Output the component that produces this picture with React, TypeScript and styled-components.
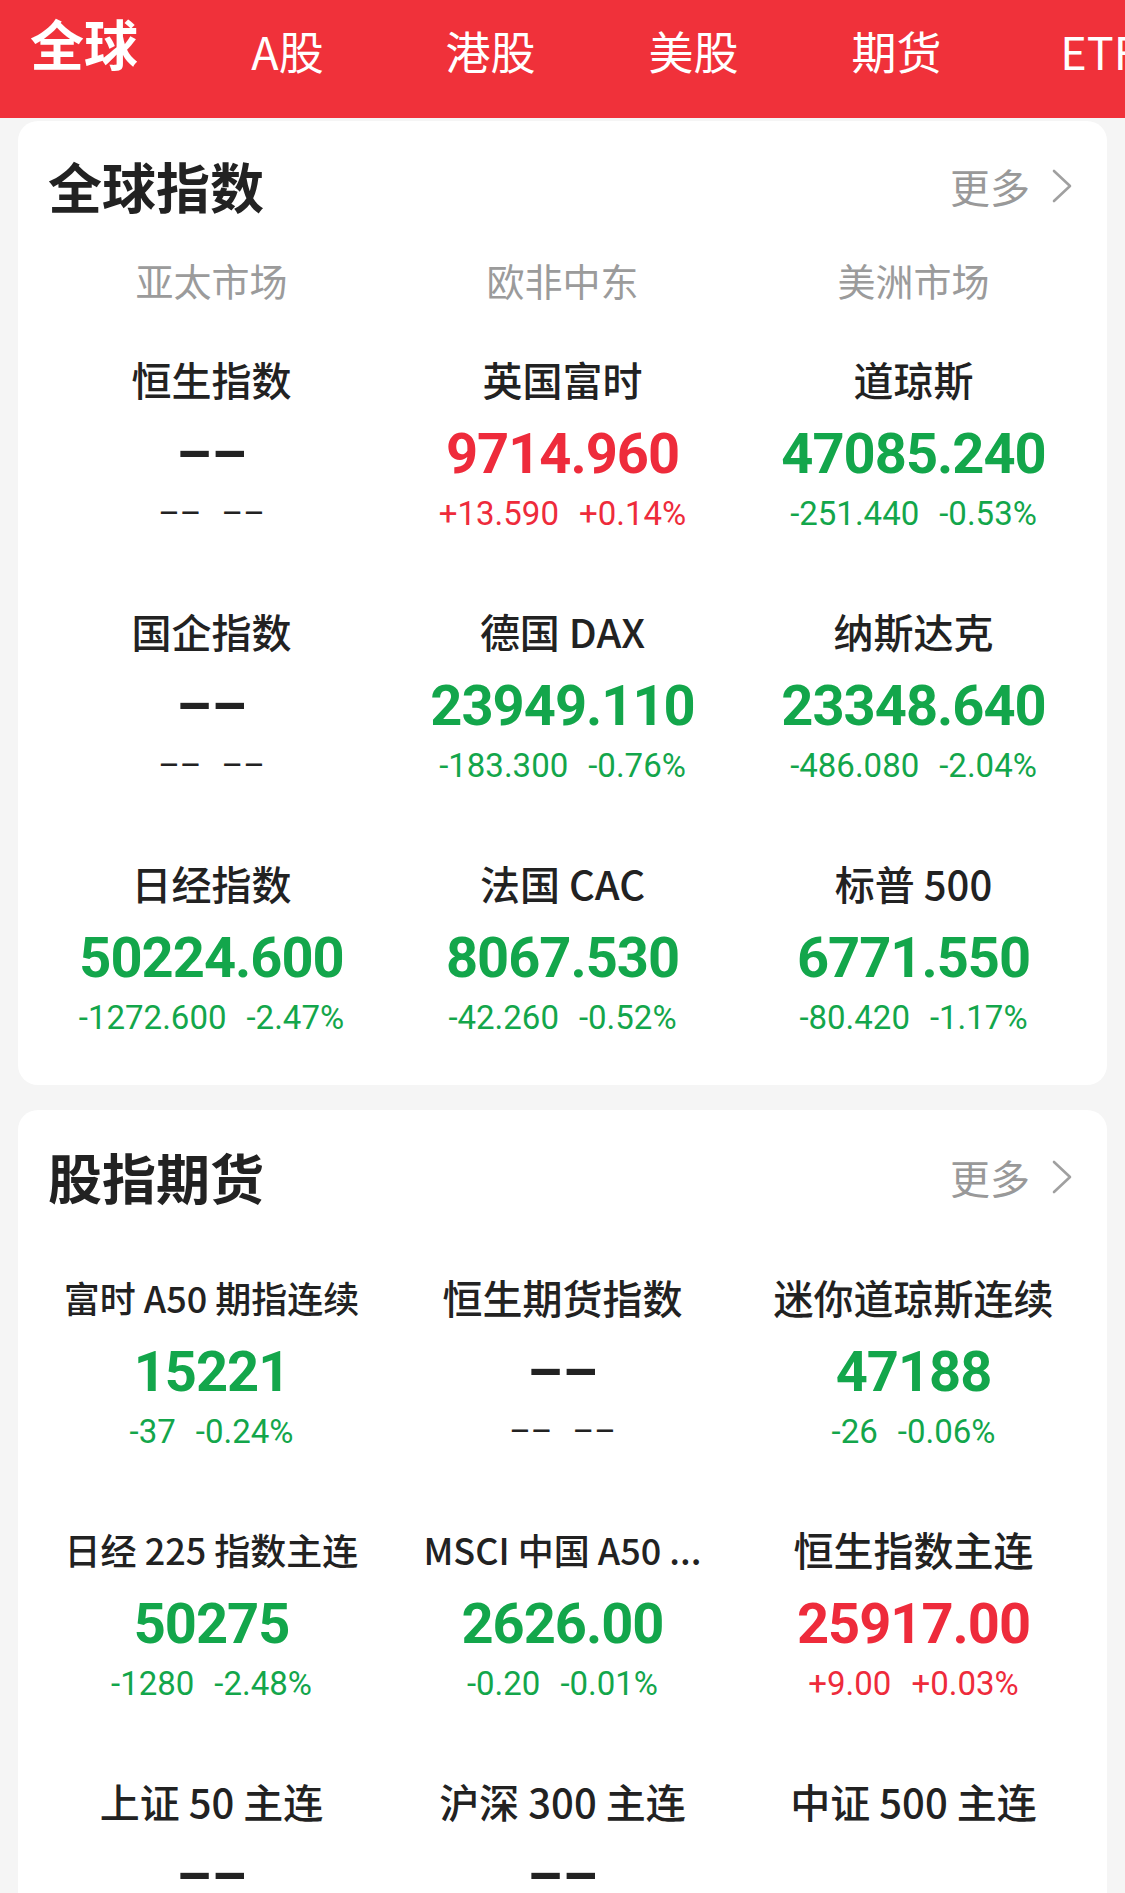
import React from "react";
import styled, { createGlobalStyle } from "styled-components";

const GlobalStyle = createGlobalStyle`
  html, body {
    margin: 0;
    padding: 0;
    background: #f5f5f5;
  }
  body {
    width: 1125px;
    font-family: "Noto Sans CJK SC", "Roboto", sans-serif;
  }
`;

const RED = "#ee2b3b";
const GREEN = "#13a64b";

type Trend = "up" | "down" | "flat";

type Quote = {
  name: string;
  nameSize?: number;
  value?: string;
  change?: string;
  pct?: string;
  trend: Trend;
  empty?: boolean;
};

const globalIndexes: Quote[] = [
  { name: "恒生指数", trend: "flat" },
  { name: "英国富时", value: "9714.960", change: "+13.590", pct: "+0.14%", trend: "up" },
  { name: "道琼斯", value: "47085.240", change: "-251.440", pct: "-0.53%", trend: "down" },
  { name: "国企指数", trend: "flat" },
  { name: "德国 DAX", value: "23949.110", change: "-183.300", pct: "-0.76%", trend: "down" },
  { name: "纳斯达克", value: "23348.640", change: "-486.080", pct: "-2.04%", trend: "down" },
  { name: "日经指数", value: "50224.600", change: "-1272.600", pct: "-2.47%", trend: "down" },
  { name: "法国 CAC", value: "8067.530", change: "-42.260", pct: "-0.52%", trend: "down" },
  { name: "标普 500", value: "6771.550", change: "-80.420", pct: "-1.17%", trend: "down" },
];

const futures: Quote[] = [
  { name: "富时 A50 期指连续", nameSize: 36, value: "15221", change: "-37", pct: "-0.24%", trend: "down" },
  { name: "恒生期货指数", trend: "flat" },
  { name: "迷你道琼斯连续", value: "47188", change: "-26", pct: "-0.06%", trend: "down" },
  { name: "日经 225 指数主连", nameSize: 36, value: "50275", change: "-1280", pct: "-2.48%", trend: "down" },
  { name: "MSCI 中国 A50 ...", nameSize: 36, value: "2626.00", change: "-0.20", pct: "-0.01%", trend: "down" },
  { name: "恒生指数主连", value: "25917.00", change: "+9.00", pct: "+0.03%", trend: "up" },
  { name: "上证 50 主连", trend: "flat" },
  { name: "沪深 300 主连", trend: "flat" },
  { name: "中证 500 主连", trend: "flat", empty: true },
];

const tabs = ["A股", "港股", "美股", "期货", "ETF"];

const Page = styled.div`
  width: 1125px;
  height: 1893px;
  background: #f5f5f5;
  overflow: hidden;
`;

const TopBar = styled.div`
  height: 118px;
  background: #f0313a;
  display: flex;
  align-items: flex-start;
  padding-left: 30px;
  overflow: hidden;
  white-space: nowrap;
`;

const MainTab = styled.div`
  flex-shrink: 0;
  margin-top: 13px;
  margin-right: 48px;
  font-size: 54px;
  line-height: 60px;
  font-weight: 700;
  color: #fff;
`;

const Tab = styled.div`
  flex-shrink: 0;
  width: 203px;
  margin-top: 25px;
  text-align: center;
  font-size: 45px;
  line-height: 52px;
  color: #fff;
`;

const Card = styled.section<{ $top: number; $pt: number; $pb: number }>`
  margin: ${(p) => p.$top}px 18px 0;
  padding: ${(p) => p.$pt}px 18px ${(p) => p.$pb}px;
  background: #fff;
  border-radius: 20px;
`;

const TitleRow = styled.div`
  display: flex;
  align-items: center;
  justify-content: space-between;
  height: 60px;
  padding: 0 17px 0 12px;
`;

const Title = styled.h2`
  margin: 0;
  font-size: 54px;
  line-height: 60px;
  font-weight: 700;
  color: #222;
`;

const More = styled.div`
  display: flex;
  align-items: center;
  gap: 22px;
  font-size: 40px;
  color: #999;
`;

const Grid = styled.div<{ $mt: number }>`
  display: grid;
  grid-template-columns: repeat(3, 1fr);
  row-gap: 72px;
  margin-top: ${(p) => p.$mt}px;
`;

const Region = styled.div`
  text-align: center;
  font-size: 38px;
  line-height: 48px;
  color: #9b9b9b;
`;

const Cell = styled.div`
  display: flex;
  flex-direction: column;
  align-items: center;
  height: 180px;
  min-width: 0;
`;

const Name = styled.div<{ $size: number }>`
  height: 50px;
  font-size: ${(p) => p.$size}px;
  line-height: 50px;
  font-weight: 500;
  color: #222;
  white-space: nowrap;
`;

const colorOf = (t: Trend) => (t === "up" ? RED : t === "down" ? GREEN : "#222");

const Value = styled.div<{ $trend: Trend }>`
  margin-top: 18px;
  height: 64px;
  font-family: "Roboto", sans-serif;
  font-size: 56px;
  line-height: 64px;
  font-weight: 700;
  letter-spacing: -1px;
  color: ${(p) => colorOf(p.$trend)};
`;

const Dashes = styled(Value)`
  letter-spacing: 0;
`;

const Change = styled.div<{ $trend: Trend }>`
  margin-top: 8px;
  display: flex;
  gap: 20px;
  font-family: "Roboto", sans-serif;
  font-size: 33px;
  line-height: 40px;
  color: ${(p) => colorOf(p.$trend)};
`;

const SmallDashes = styled.span`
  letter-spacing: 0;
`;

function Chevron() {
  return (
    <svg width="20" height="34" viewBox="0 0 20 34" fill="none">
      <polyline points="2,2 18,17 2,32" stroke="#a0a0a0" strokeWidth="2.6" strokeLinecap="round" strokeLinejoin="round" />
    </svg>
  );
}

function QuoteCell({ q }: { q: Quote }) {
  return (
    <Cell>
      <Name $size={q.nameSize ?? 40}>{q.name}</Name>
      {q.empty ? null : q.value ? (
        <>
          <Value $trend={q.trend}>{q.value}</Value>
          <Change $trend={q.trend}>
            <span>{q.change}</span>
            <span>{q.pct}</span>
          </Change>
        </>
      ) : (
        <>
          <Dashes $trend="flat">––</Dashes>
          <Change $trend="flat">
            <SmallDashes>––</SmallDashes>
            <SmallDashes>––</SmallDashes>
          </Change>
        </>
      )}
    </Cell>
  );
}

function SectionHeader({ title }: { title: string }) {
  return (
    <TitleRow>
      <Title>{title}</Title>
      <More>
        <span>更多</span>
        <Chevron />
      </More>
    </TitleRow>
  );
}

export default function App() {
  return (
    <Page>
      <GlobalStyle />
      <TopBar>
        <MainTab>全球</MainTab>
        {tabs.map((t) => (
          <Tab key={t}>{t}</Tab>
        ))}
      </TopBar>

      <Card $top={3} $pt={35} $pb={47}>
        <SectionHeader title="全球指数" />
        <Grid $mt={40}>
          <Region>亚太市场</Region>
          <Region>欧非中东</Region>
          <Region>美洲市场</Region>
        </Grid>
        <Grid $mt={50}>
          {globalIndexes.map((q) => (
            <QuoteCell key={q.name} q={q} />
          ))}
        </Grid>
      </Card>

      <Card $top={25} $pt={37} $pb={49}>
        <SectionHeader title="股指期货" />
        <Grid $mt={65}>
          {futures.map((q) => (
            <QuoteCell key={q.name} q={q} />
          ))}
        </Grid>
      </Card>
    </Page>
  );
}
